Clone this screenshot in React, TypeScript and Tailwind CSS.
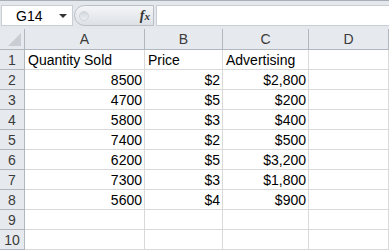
const rows: string[][] = [
  ['Quantity Sold', 'Price', 'Advertising'],
  ['8500', '$2', '$2,800'],
  ['4700', '$5', '$200'],
  ['5800', '$3', '$400'],
  ['7400', '$2', '$500'],
  ['6200', '$5', '$3,200'],
  ['7300', '$3', '$1,800'],
  ['5600', '$4', '$900'],
  ['', '', ''],
  ['', '', ''],
];

const cols = ['A', 'B', 'C', 'D'];

export default function App() {
  return (
    <div className="w-[389px] h-[250px] overflow-hidden bg-white font-['Liberation_Sans',Arial,sans-serif] text-[14px] text-black">
      {/* formula bar */}
      <div className="h-[29px] bg-[#e4e7eb] border-t border-[#a7aeb6] flex items-start pt-[4px]">
        <div className="ml-[1px] w-[72px] h-[21px] bg-white border border-[#c9ced4] flex items-center">
          <span className="ml-[14px] leading-none">G14</span>
          <span className="ml-auto mr-[5px] w-0 h-0 border-l-[4px] border-r-[4px] border-t-[4px] border-l-transparent border-r-transparent border-t-[#333]" />
        </div>
        <div className="ml-[1px] w-[80px] h-[21px] rounded-l-full border border-[#b9bfc7] bg-gradient-to-b from-[#f4f5f7] to-[#dde1e6] flex items-center">
          <span className="ml-[4px] w-[10px] h-[10px] rounded-full bg-gradient-to-b from-[#d3d7dc] to-[#eef0f2] border border-[#d0d4d9]" />
          <span className="ml-auto mr-[3px] font-['Liberation_Serif',serif] italic font-bold text-[14px] text-[#333] leading-none">
            f<span className="text-[11px]">x</span>
          </span>
        </div>
        <div className="ml-[2px] flex-1 h-[21px] bg-white border border-[#c9ced4] border-r-0" />
      </div>

      {/* grid */}
      <div className="grid grid-cols-[25px_120px_78px_86px_80px] grid-rows-[21px_repeat(10,20px)]">
        <div className="bg-[#e6e9ed] border-r border-b border-[#b1b7be] flex items-end justify-end pr-[3px] pb-[3px]">
          <span className="w-0 h-0 border-l-[13px] border-t-[13px] border-l-transparent border-t-transparent border-b-0 border-r-0 [border-bottom:13px_solid_#c9ced4] [border-left:13px_solid_transparent]" />
        </div>
        {cols.map((c) => (
          <div
            key={c}
            className="bg-[#e6e9ed] border-r border-b border-[#b1b7be] flex items-center justify-center text-[#3b3b3b] leading-none"
          >
            {c}
          </div>
        ))}
        {rows.map((r, i) => (
          <div key={i} className="contents">
            <div className="bg-[#e6e9ed] border-r border-b border-[#b1b7be] flex items-center justify-center text-[#3b3b3b] leading-none">
              {i + 1}
            </div>
            {r.map((v, j) => (
              <div
                key={j}
                className={
                  'border-r border-b border-[#d9d9d9] flex items-center leading-none whitespace-nowrap ' +
                  (i === 0 ? 'justify-start pl-[3px]' : 'justify-end pr-[2px]')
                }
              >
                {v}
              </div>
            ))}
            <div className="border-r border-b border-[#d9d9d9]" />
          </div>
        ))}
      </div>
    </div>
  );
}
